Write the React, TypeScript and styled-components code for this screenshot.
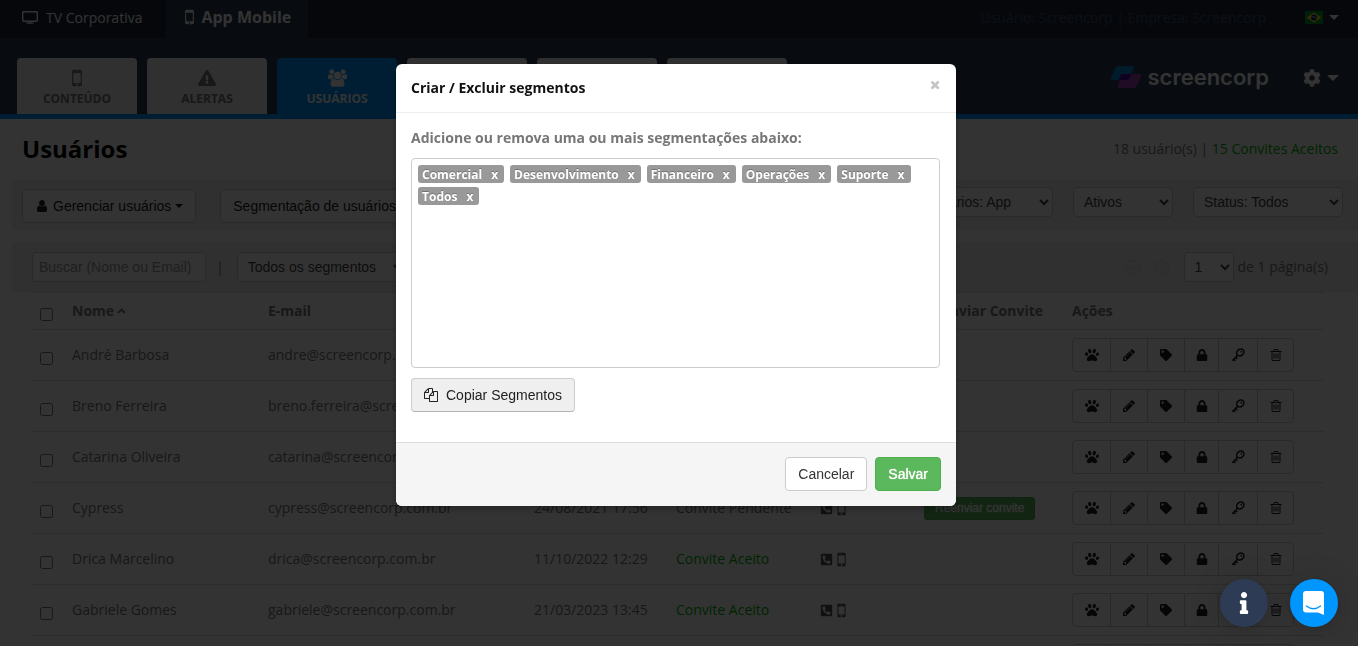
import React from "react";
import styled, { createGlobalStyle, css } from "styled-components";
import { FaPaw, FaTag, FaLock, FaCog, FaInfo, FaPhoneSquareAlt, FaExclamationTriangle } from "react-icons/fa";

const sans = `"Open Sans", "Noto Sans", sans-serif`;
const control = `"Liberation Sans", Arial, sans-serif`;

const GlobalStyle = createGlobalStyle`
  *, *::before, *::after { box-sizing: border-box; }
  html, body, #root { height: 100%; }
  body {
    margin: 0;
    overflow: hidden;
    background: #fff;
    color: #777;
    font: 14px/20px ${sans};
  }
  button, input, select { font: 14px/20px ${control}; margin: 0; }
  svg { display: block; flex: none; }
`;

/* ---------- icons ---------- */

const paths = {
  mobile:
    "M976 1408q0-33-23.500-56.500t-56.500-23.500-56.500 23.500-23.500 56.500 23.500 56.500 56.500 23.500 56.500-23.500 23.500-56.500zm208-160v-704q0-13-9.500-22.500t-22.500-9.500h-512q-13 0-22.500 9.500t-9.500 22.500v704q0 13 9.500 22.500t22.500 9.500h512q13 0 22.500-9.500t9.500-22.500zm-192-848q0-16-16-16h-160q-16 0-16 16t16 16h160q16 0 16-16zm288-16v1024q0 52-38 90t-90 38h-512q-52 0-90-38t-38-90v-1024q0-52 38-90t90-38h512q52 0 90 38t38 90z",
  user:
    "M1536 1399q0 109-62.500 187t-150.500 78h-854q-88 0-150.500-78t-62.500-187q0-85 8.500-160.500t31.500-152 58.500-131 94-89 134.500-34.500q131 128 313 128t313-128q76 0 134.500 34.500t94 89 58.500 131 31.500 152 8.500 160.500zm-256-887q0 159-112.500 271.500t-271.500 112.500-271.500-112.500-112.500-271.500 112.500-271.500 271.500-112.500 271.500 112.500 112.500 271.500z",
  users:
    "M593 896q-162 5-265 128h-134q-82 0-138-40.500t-56-118.500q0-353 124-353 6 0 43.500 21t97.500 42.500 119 21.500q67 0 133-23-5 37-5 66 0 139 81 256zm1071 637q0 120-73 189.500t-194 69.500h-874q-121 0-194-69.500t-73-189.500q0-53 3.500-103.500t14-109 26.500-108.500 43-97.500 62-81 85.500-53.500 111.500-20q10 0 43 21.500t73 48 107 48 135 21.500 135-21.500 107-48 73-48 43-21.500q61 0 111.500 20t85.500 53.500 62 81 43 97.500 26.500 108.500 14 109 3.500 103.500zm-1024-1277q0 106-75 181t-181 75-181-75-75-181 75-181 181-75 181 75 75 181zm704 384q0 159-112.500 271.500t-271.500 112.500-271.500-112.500-112.500-271.500 112.500-271.500 271.500-112.500 271.500 112.500 112.500 271.500zm576 225q0 78-56 118.500t-138 40.500h-134q-103-123-265-128 81-117 81-256 0-29-5-66 66 23 133 23 59 0 119-21.500t97.500-42.500 43.500-21q124 0 124 353zm-128-609q0 106-75 181t-181 75-181-75-75-181 75-181 181-75 181 75 75 181z",
  pencil:
    "M491 1536l91-91-235-235-91 91v107h128v128h107zm523-928q0-22-22-22-10 0-17 7l-542 542q-7 7-7 17 0 22 22 22 10 0 17-7l542-542q7-7 7-17zm-54-192l416 416-832 832h-416v-416zm683 96q0 53-37 90l-166 166-416-416 166-165q36-38 90-38 53 0 91 38l235 234q37 39 37 91z",
  trash:
    "M704 736v576q0 14-9 23t-23 9h-64q-14 0-23-9t-9-23v-576q0-14 9-23t23-9h64q14 0 23 9t9 23zm256 0v576q0 14-9 23t-23 9h-64q-14 0-23-9t-9-23v-576q0-14 9-23t23-9h64q14 0 23 9t9 23zm256 0v576q0 14-9 23t-23 9h-64q-14 0-23-9t-9-23v-576q0-14 9-23t23-9h64q14 0 23 9t9 23zm128 724v-948h-896v948q0 22 7 40.500t14.500 27 10.500 8.500h832q3 0 10.500-8.500t14.500-27 7-40.500zm-672-1076h448l-48-117q-7-9-17-11h-317q-10 2-17 11zm928 32v64q0 14-9 23t-23 9h-96v948q0 83-47 143.500t-113 60.500h-832q-66 0-113-58.500t-47-141.500v-952h-96q-14 0-23-9t-9-23v-64q0-14 9-23t23-9h309l70-167q15-37 54-63t79-26h320q40 0 79 26t54 63l70 167h309q14 0 23 9t9 23z",
  copy:
    "M1696 384q40 0 68 28t28 68v1216q0 40-28 68t-68 28h-960q-40 0-68-28t-28-68v-288h-544q-40 0-68-28t-28-68v-672q0-40 20-88t48-76l408-408q28-28 76-48t88-20h416q40 0 68 28t28 68v328q68-40 128-40h416zm-544 213l-299 299h299v-299zm-640-384l-299 299h299v-299zm196 647l316-316v-416h-384v416q0 40-28 68t-68 28h-416v640h512v-256q0-40 20-88t48-76zm956 804v-1152h-384v416q0 40-28 68t-68 28h-416v640h896z",
};

type GlyphProps = { name: keyof typeof paths; width: number; height: number; box?: string };
const Glyph = ({ name, width, height, box = "0 0 1792 1792" }: GlyphProps) => (
  <svg width={width} height={height} viewBox={box} fill="currentColor" aria-hidden="true">
    <path d={paths[name]} />
  </svg>
);

const MonitorIcon = () => (
  <svg width="16" height="13" viewBox="0 0 16 13" fill="none" stroke="currentColor" aria-hidden="true">
    <rect x="0.700" y="0.700" width="14.600" height="9.600" rx="1" strokeWidth="1.400" />
    <path d="M8 10v2M4.500 12.200h7" strokeWidth="1.300" />
  </svg>
);

const KeyIcon = () => (
  <svg width="14" height="14" viewBox="0 0 14 14" fill="none" stroke="currentColor" aria-hidden="true">
    <ellipse cx="9.300" cy="4.500" rx="3.900" ry="3.200" transform="rotate(-40 9.300 4.500)" strokeWidth="1.600" />
    <circle cx="10.300" cy="3.700" r="0.900" fill="currentColor" stroke="none" />
    <path d="M7.200 6.700L1.200 12.700M2.600 11.200l1.800 1.700M4.600 9.300l1.800 1.700" strokeWidth="1.600" />
  </svg>
);

const ArrowCircle = ({ flip }: { flip?: boolean }) => (
  <svg width="17" height="17" viewBox="0 0 17 17" fill="none" stroke="currentColor" strokeWidth="2" aria-hidden="true">
    <circle cx="8.500" cy="8.500" r="7" />
    <path d={flip ? "M4.500 8.500h7M9 5.500l3 3-3 3" : "M12.500 8.500h-7M8 5.500l-3 3 3 3"} strokeWidth="1.600" />
  </svg>
);

const BrazilFlag = () => (
  <svg width="18" height="13" viewBox="0 0 18 13" aria-hidden="true">
    <rect width="18" height="13" fill="#009b3a" />
    <path d="M9 1.500L16.500 6.500 9 11.500 1.500 6.500z" fill="#fedf00" />
    <circle cx="9" cy="6.500" r="3" fill="#002776" />
    <path d="M6.200 5.700q3-.5 5.400 1.700" stroke="#fff" strokeWidth="0.700" fill="none" />
  </svg>
);

const LogoMark = () => (
  <svg width="32" height="24" viewBox="0 0 32 24" aria-hidden="true">
    <path d="M8 1h14q3 0 2 2.500L19.800 12.500Q19 15 16.500 15H2.500Q0 15 1 12.500L5 3.500Q6 1 8 1z" fill="#0087d2" />
    <path d="M13 9h16.500q2.500 0 1.500 2.500L27.200 20.500Q26 23 23.500 23H9.500Q7 23 8 20.500L11 11.500Q11.500 9 13 9z" fill="#a03cb4" />
    <path d="M11.500 9H21.500l-1.700 3.800Q19 15 16.500 15H8.700L10.500 10.500Q11 9 11.500 9z" fill="#4b00a0" />
  </svg>
);

const ChatIcon = () => (
  <svg width="24" height="26" viewBox="0 0 24 26" aria-hidden="true">
    <path d="M4 1h15q3 0 3 3v21l-6-2.500H4q-3 0-3-3V4q0-3 3-3z" fill="#fff" />
    <path d="M4.500 16q7 5.500 14 0" fill="none" stroke="#0096ff" strokeWidth="1.400" strokeLinecap="round" />
  </svg>
);

const Caret = styled.span<{ $size?: number }>`
  width: 0;
  height: 0;
  border: solid transparent;
  border-width: ${(p) => p.$size ?? 4}px ${(p) => p.$size ?? 4}px 0;
  border-top-color: currentColor;
`;

/* ---------- page header ---------- */

const Page = styled.div`
  height: 100%;
  overflow: hidden;
`;

const TopBar = styled.nav`
  display: flex;
  align-items: stretch;
  height: 38px;
  background: #1d2739;
  color: #fff;
`;

const ProductLink = styled.a<{ $active?: boolean }>`
  display: flex;
  align-items: center;
  gap: 8px;
  padding: 0 20px 3px 22px;
  color: inherit;
  text-decoration: none;
  ${(p) =>
    p.$active &&
    css`
      gap: 6px;
      padding: 0 17px 4px 18px;
      margin-left: 4px;
      background: #29384e;
      font-size: 16px;
      font-weight: 700;
    `}
`;

const Account = styled.div`
  display: flex;
  align-items: center;
  margin-left: auto;
  padding: 0 19px 3px 0;
  gap: 39px;
  color: #3d5070;
`;

const PlainButton = styled.button`
  display: flex;
  align-items: center;
  gap: 6px;
  padding: 0;
  border: 0;
  background: none;
  color: #fff;
`;

const Header = styled.header`
  display: flex;
  align-items: flex-end;
  padding: 20px 19px 0 17px;
  background: #29384e;
  border-bottom: 5px solid #0096ff;
`;

const Tabs = styled.nav`
  display: flex;
  gap: 10px;
`;

const Tab = styled.a<{ $active?: boolean }>`
  display: flex;
  flex-direction: column;
  align-items: center;
  gap: 2px;
  width: 120px;
  height: 56px;
  padding-top: 11px;
  border-radius: 4px 4px 0 0;
  background: ${(p) => (p.$active ? "#0096ff" : "#eee")};
  color: ${(p) => (p.$active ? "#fff" : "#777")};
  font-size: 12px;
  font-weight: 700;
  text-decoration: none;
`;

const Brand = styled.div`
  display: flex;
  align-items: center;
  align-self: flex-start;
  gap: 5px;
  margin-left: auto;
  padding-top: 4px;
  color: #fff;
  font: 600 22px/30px Inter, sans-serif;
`;

const Settings = styled(PlainButton)`
  align-self: flex-start;
  margin: 11px 0 0 34px;
`;

/* ---------- page body ---------- */

const TitleRow = styled.div`
  display: flex;
  align-items: center;
  justify-content: space-between;
  height: 61px;
  padding: 0 20px 2px 22px;
`;

const Title = styled.h1`
  margin: 0;
  color: #000;
  font: 700 24px/40px ${sans};
`;

const Accepted = styled.span`
  color: #00b400;
`;

const Panel = styled.section`
  display: flex;
  align-items: center;
  height: 50px;
  margin: 0 0 12px 12px;
  background: #eee;
`;

const Toolbar = styled(Panel)`
  padding: 2px 15px 0 10px;
  gap: 24px;
`;

const Filters = styled.div`
  display: flex;
  gap: 20px;
  margin: 0 0 8px auto;
`;

const SearchBar = styled(Panel)`
  margin-bottom: 0;
  padding: 0 30px 0 20px;
`;

const Button = styled.button<{ $tone?: "plain" | "raised" | "success" }>`
  display: flex;
  align-items: center;
  gap: 8px;
  height: 34px;
  padding: 0 12px;
  border: 1px solid #ccc;
  border-radius: 4px;
  background: #fff;
  color: #333;
  ${(p) =>
    p.$tone === "raised" &&
    css`
      background: #efefef;
      border-bottom-color: #b3b3b3;
      color: #222;
    `}
  ${(p) =>
    p.$tone === "success" &&
    css`
      background: #5cb85c;
      border-color: #4cae4c;
      color: #fff;
      text-shadow: 0 0 1px #fff;
    `}
`;

const MenuButton = styled(Button)`
  gap: 4px;
  color: #222;
`;

const Select = styled.select<{ $width: number }>`
  width: ${(p) => p.$width}px;
  height: 30px;
  padding: 0 6px;
  border: 1px solid #ccc;
  border-radius: 4px;
  background: #fff;
  color: #444;
`;

const Search = styled.input`
  width: 174px;
  height: 30px;
  padding: 4px 6px;
  border: 1px solid #ccc;
  border-radius: 4px;
  background: #fff;
  &::placeholder { color: #999; }
`;

const Divider = styled.span`
  padding: 0 13px 0 10px;
`;

const Pager = styled.div`
  display: flex;
  align-items: center;
  gap: 12px;
  margin-left: auto;
  label { display: flex; align-items: center; gap: 4px; margin-left: 2px; }
`;

const PagerButton = styled(PlainButton)`
  color: #e4e4e4;
`;

const TableWrap = styled.div`
  padding: 0 34px 0 32px;
`;

const Table = styled.table`
  width: 100%;
  table-layout: fixed;
  border-collapse: separate;
  border-spacing: 0;
  th, td {
    padding: 8px;
    border-top: 1px solid #ddd;
    text-align: left;
    vertical-align: middle;
    white-space: nowrap;
  }
  th { height: 37px; font-weight: 700; }
`;

const Check = styled.input`
  display: block;
  width: 13px;
  height: 13px;
  margin: 6px 0 0;
`;

const SortButton = styled(PlainButton)`
  color: inherit;
  font: inherit;
  gap: 3px;
`;

const Contact = styled.div`
  display: flex;
  align-items: center;
  gap: 4px;
  color: #555;
`;

const ResendButton = styled(Button)`
  height: 23px;
  padding: 0 10px;
  border-radius: 3px;
  font-size: 12px;
`;

const Actions = styled.div`
  display: flex;
`;

const Action = styled.button`
  display: flex;
  align-items: center;
  height: 34px;
  padding: 0 12px;
  border: 1px solid #ccc;
  background: transparent;
  color: #222;
  & + & { margin-left: -1px; }
  &:first-child { border-radius: 4px 0 0 4px; }
  &:last-child { border-radius: 0 4px 4px 0; }
`;

const ActionIcon = styled.span<{ $width: number }>`
  display: flex;
  justify-content: center;
  width: ${(p) => p.$width}px;
`;

/* ---------- dialog ---------- */

const Backdrop = styled.div`
  position: fixed;
  inset: 0;
  display: flex;
  align-items: flex-start;
  justify-content: center;
  padding: 64px 6px 0 0;
  background: rgba(0, 0, 0, 0.8);
`;

const Dialog = styled.div`
  width: 560px;
  max-width: 100%;
  overflow: hidden;
  border-radius: 6px;
  background: #fff;
  box-shadow: 0 3px 7px rgba(0, 0, 0, 0.3);
`;

const DialogHeader = styled.div`
  display: flex;
  align-items: center;
  justify-content: space-between;
  height: 49px;
  padding: 0 15px;
  border-bottom: 1px solid #eee;
`;

const DialogTitle = styled.h2`
  margin: 0;
  color: #111;
  font: 700 14px/20px ${sans};
`;

const Close = styled.button`
  padding: 0 0 6px;
  border: 0;
  background: none;
  color: #c4c4c4;
  font: 800 20px/20px ${sans};
`;

const DialogBody = styled.div`
  padding: 15px 16px 30px 15px;
`;

const FieldLabel = styled.p`
  margin: 0 0 10px;
  font-weight: 700;
`;

const TagBox = styled.div`
  display: flex;
  flex-wrap: wrap;
  align-content: flex-start;
  gap: 4px 6px;
  height: 210px;
  margin-bottom: 10px;
  padding: 6px;
  border: 1px solid #ccc;
  border-radius: 4px;
`;

const Tag = styled.span`
  display: flex;
  gap: 9px;
  height: 18px;
  padding: 0 6px 0 4px;
  border-radius: 3px;
  background: #999;
  color: #fff;
  font: 700 12px/20px ${sans};
  text-shadow: 0 -1px 0 rgba(0, 0, 0, 0.25);
  button { padding: 0; border: 0; background: none; color: inherit; font: inherit; text-shadow: inherit; }
`;

const DialogFooter = styled.div`
  display: flex;
  justify-content: flex-end;
  gap: 8px;
  padding: 14px 15px 15px;
  border-top: 1px solid #ddd;
  background: #f5f5f5;
`;

const Floating = styled.div`
  position: fixed;
  right: 20px;
  bottom: 19px;
  display: flex;
  gap: 22px;
`;

const RoundButton = styled.button<{ $color: string }>`
  display: flex;
  align-items: center;
  justify-content: center;
  width: 48px;
  height: 48px;
  padding: 0;
  border: 0;
  border-radius: 50%;
  background: ${(p) => p.$color};
  color: #fff;
  box-shadow: 0 1px 6px rgba(0, 0, 0, 0.1), 0 2px 32px rgba(0, 0, 0, 0.16);
`;

/* ---------- data ---------- */

type User = { name: string; email: string; date: string; status?: "accepted" | "pending" };
const users: User[] = [
  { name: "André Barbosa", email: "andre@screencorp.com.br", date: "11/10/2022 12:29", status: "accepted" },
  { name: "Breno Ferreira", email: "breno.ferreira@screencorp.com.br", date: "11/10/2022 12:29", status: "accepted" },
  { name: "Catarina Oliveira", email: "catarina@screencorp.com.br", date: "11/10/2022 12:29", status: "accepted" },
  { name: "Cypress", email: "cypress@screencorp.com.br", date: "24/08/2021 17:56", status: "pending" },
  { name: "Drica Marcelino", email: "drica@screencorp.com.br", date: "11/10/2022 12:29", status: "accepted" },
  { name: "Gabriele Gomes", email: "gabriele@screencorp.com.br", date: "21/03/2023 13:45", status: "accepted" },
  { name: "", email: "", date: "" },
];

const segments = ["Comercial", "Desenvolvimento", "Financeiro", "Operações", "Suporte", "Todos"];

const UserActions = () => (
  <Actions>
    <Action aria-label="Permissões"><ActionIcon $width={13}><FaPaw size={14} /></ActionIcon></Action>
    <Action aria-label="Editar"><ActionIcon $width={12}><Glyph name="pencil" width={14} height={14} /></ActionIcon></Action>
    <Action aria-label="Segmentos"><ActionIcon $width={12}><FaTag size={12} /></ActionIcon></Action>
    <Action aria-label="Bloquear"><ActionIcon $width={9}><FaLock size={12} /></ActionIcon></Action>
    <Action aria-label="Senha"><ActionIcon $width={14}><KeyIcon /></ActionIcon></Action>
    <Action aria-label="Excluir"><ActionIcon $width={11}><Glyph name="trash" width={14} height={14} /></ActionIcon></Action>
  </Actions>
);

export default function App() {
  return (
    <>
      <GlobalStyle />
      <Page>
        <TopBar>
          <ProductLink href="#tv"><MonitorIcon />TV Corporativa</ProductLink>
          <ProductLink href="#app" $active>
            <Glyph name="mobile" width={11} height={16} box="512 192 768 1408" />
            App Mobile
          </ProductLink>
          <Account>
            <span>Usuário: Screencorp | Empresa: Screencorp</span>
            <PlainButton aria-label="Idioma"><BrazilFlag /><Caret $size={5} /></PlainButton>
          </Account>
        </TopBar>
        <Header>
          <Tabs>
            <Tab href="#conteudo"><Glyph name="mobile" width={10} height={18} box="512 192 768 1408" />CONTEÚDO</Tab>
            <Tab href="#alertas"><FaExclamationTriangle size={18} />ALERTAS</Tab>
            <Tab href="#usuarios" $active><Glyph name="users" width={19} height={18} box="0 0 1920 1792" />USUÁRIOS</Tab>
            <Tab href="#tab4" />
            <Tab href="#tab5" />
            <Tab href="#tab6" />
          </Tabs>
          <Brand><LogoMark />screencorp</Brand>
          <Settings aria-label="Configurações"><FaCog size={18} /><Caret $size={6} /></Settings>
        </Header>

        <TitleRow>
          <Title>Usuários</Title>
          <span>18 usuário(s) | <Accepted>15 Convites Aceitos</Accepted></span>
        </TitleRow>

        <Toolbar>
          <MenuButton><Glyph name="user" width={14} height={14} />Gerenciar usuários<Caret /></MenuButton>
          <MenuButton>Segmentação de usuários<Caret /></MenuButton>
          <Filters>
            <Select $width={140} aria-label="Tipo"><option>Usuários: App</option></Select>
            <Select $width={100} aria-label="Situação"><option>Ativos</option></Select>
            <Select $width={150} aria-label="Status"><option>Status: Todos</option></Select>
          </Filters>
        </Toolbar>

        <SearchBar>
          <Search placeholder="Buscar (Nome ou Email)" aria-label="Buscar" />
          <Divider>|</Divider>
          <Select $width={170} aria-label="Segmento"><option>Todos os segmentos</option></Select>
          <Pager>
            <PagerButton aria-label="Anterior"><ArrowCircle /></PagerButton>
            <PagerButton aria-label="Próxima"><ArrowCircle flip /></PagerButton>
            <label><Select $width={50}><option>1</option></Select>de 1 página(s)</label>
          </Pager>
        </SearchBar>

        <TableWrap>
          <Table>
            <colgroup>
              <col width="32" /><col width="196" /><col width="266" /><col width="142" />
              <col width="144" /><col width="104" /><col width="148" /><col />
            </colgroup>
            <thead>
              <tr>
                <th><Check type="checkbox" aria-label="Selecionar todos" /></th>
                <th>
                  <SortButton>
                    Nome
                    <svg width="9" height="6" viewBox="0 0 9 6" fill="none" stroke="currentColor" strokeWidth="1.800"><path d="M1 5l3.500-3.500L8 5" /></svg>
                  </SortButton>
                </th>
                <th>E-mail</th>
                <th>Data</th>
                <th>Status</th>
                <th>Contato</th>
                <th>Reenviar Convite</th>
                <th>Ações</th>
              </tr>
            </thead>
            <tbody>
              {users.map((u, i) => (
                <tr key={i}>
                  <td><Check type="checkbox" aria-label={`Selecionar ${u.name}`} /></td>
                  <td>{u.name}</td>
                  <td>{u.email}</td>
                  <td>{u.date}</td>
                  <td>
                    {u.status === "pending" && "Convite Pendente"}
                    {u.status === "accepted" && <Accepted>Convite Aceito</Accepted>}
                  </td>
                  <td>
                    <Contact>
                      <FaPhoneSquareAlt size={13} />
                      <Glyph name="mobile" width={9} height={15} box="512 192 768 1408" />
                    </Contact>
                  </td>
                  <td>{u.status === "pending" && <ResendButton $tone="success">Reenviar convite</ResendButton>}</td>
                  <td><UserActions /></td>
                </tr>
              ))}
            </tbody>
          </Table>
        </TableWrap>
      </Page>

      <Backdrop>
        <Dialog role="dialog" aria-modal="true" aria-labelledby="dialog-title">
          <DialogHeader>
            <DialogTitle id="dialog-title">Criar / Excluir segmentos</DialogTitle>
            <Close aria-label="Fechar">×</Close>
          </DialogHeader>
          <DialogBody>
            <FieldLabel>Adicione ou remova uma ou mais segmentações abaixo:</FieldLabel>
            <TagBox>
              {segments.map((s) => (
                <Tag key={s}>{s}<button aria-label={`Remover ${s}`}>x</button></Tag>
              ))}
            </TagBox>
            <Button $tone="raised"><Glyph name="copy" width={14} height={14} />Copiar Segmentos</Button>
          </DialogBody>
          <DialogFooter>
            <Button>Cancelar</Button>
            <Button $tone="success">Salvar</Button>
          </DialogFooter>
        </Dialog>
      </Backdrop>

      <Floating>
        <RoundButton $color="#2d3b55" aria-label="Informações"><FaInfo size={22} /></RoundButton>
        <RoundButton $color="#0096ff" aria-label="Chat"><ChatIcon /></RoundButton>
      </Floating>
    </>
  );
}
